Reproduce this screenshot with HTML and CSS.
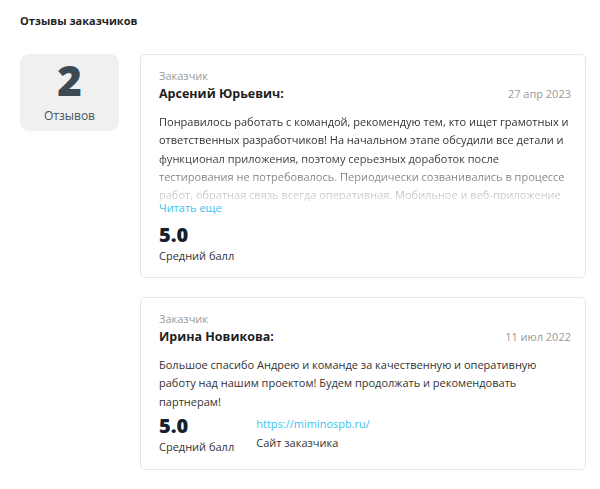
FILE: index.html
```html
<!DOCTYPE html>
<html lang="ru">
<head>
<meta charset="utf-8">
<link rel="stylesheet" href="styles.css">
</head>
<body>
<div class="page">
  <h2 class="title">Отзывы заказчиков</h2>
  <div class="layout">
    <div class="count">
      <div class="count-num">2</div>
      <div class="count-label">Отзывов</div>
    </div>
    <div class="list">
      <div class="card">
        <div class="role">Заказчик</div>
        <div class="head">
          <div class="name">Арсений Юрьевич:</div>
          <div class="date">27 апр 2023</div>
        </div>
        <div class="text clipped">Понравилось работать с командой, рекомендую тем, кто ищет грамотных и ответственных разработчиков! На начальном этапе обсудили все детали и функционал приложения, поэтому серьезных доработок после тестирования не потребовалось. Периодически созванивались в процессе работ, обратная связь всегда оперативная. Мобильное и веб-приложение</div>
        <a class="more">Читать еще</a>
        <div class="stats">
          <div class="stat">
            <div class="score">5.0</div>
            <div class="stat-label">Средний балл</div>
          </div>
        </div>
      </div>
      <div class="card card-last">
        <div class="role">Заказчик</div>
        <div class="head">
          <div class="name">Ирина Новикова:</div>
          <div class="date">11 июл 2022</div>
        </div>
        <div class="text">Большое спасибо Андрею и команде за качественную и оперативную работу над нашим проектом! Будем продолжать и рекомендовать партнерам!</div>
        <div class="stats stats-tight">
          <div class="stat">
            <div class="score">5.0</div>
            <div class="stat-label">Средний балл</div>
          </div>
          <div class="stat">
            <a class="site">https://miminospb.ru/</a>
            <div class="stat-label">Сайт заказчика</div>
          </div>
        </div>
      </div>
    </div>
  </div>
</div>
</body>
</html>
```
FILE: styles.css
```css
* { box-sizing: border-box; }
body {
  margin: 0;
  background: #fff;
  font-family: "Open Sans", "Liberation Sans", sans-serif;
  color: #333;
}
.page { padding: 13px 14px 0 20px; }
.title {
  margin: 0 0 25px;
  font-size: 11px;
  font-weight: 700;
  color: #222;
  line-height: 16px;
}
.layout { display: flex; gap: 21px; align-items: flex-start; }
.count {
  width: 99px;
  height: 77px;
  background: #f0f0f0;
  border-radius: 9px;
  display: flex;
  flex-direction: column;
  align-items: center;
  padding-top: 4px;
}
.count-num {
  font-size: 42px;
  line-height: 44px;
  font-weight: 800;
  color: #3c4a53;
}
.count-label {
  font-size: 12px;
  color: #4a545a;
  line-height: 16px;
  margin-top: 6px;
}
.list { flex: 1; display: flex; flex-direction: column; gap: 19px; }
.card {
  border: 1px solid #e6e6e6;
  border-radius: 5px;
  padding: 13px 12px 13px 18px;
}
.card-last { padding-bottom: 14px; }
.role { font-size: 11px; color: #9a9a9a; line-height: 16px; }
.head { display: flex; justify-content: space-between; align-items: baseline; margin-top: 1px; padding-right: 2px; }
.name { font-size: 12.5px; font-weight: 700; color: #1e1e1e; line-height: 18px; }
.date { font-size: 11px; color: #9a9a9a; }
.text {
  margin-top: 10px;
  font-size: 11px;
  line-height: 18.3px;
  color: #333;
}
.text.clipped {
  height: 88px;
  overflow: hidden;
  -webkit-mask-image: linear-gradient(to bottom, #000 50%, rgba(0,0,0,0.15) 100%);
  mask-image: linear-gradient(to bottom, #000 50%, rgba(0,0,0,0.15) 100%);
}
.more {
  display: block;
  margin-top: 1px;
  font-size: 11px;
  line-height: 12px;
  color: #3cc3ee;
}
.stats { display: flex; gap: 22px; margin-top: 9px; }
.stats-tight { margin-top: 3px; }
.stat { display: flex; flex-direction: column; }
.score { font-size: 20px; font-weight: 800; color: #14202b; line-height: 24px; }
.site { font-size: 11px; color: #3cc3ee; line-height: 20px; }
.stat-label { font-size: 11px; color: #333; line-height: 16px; margin-top: 1px; }
```
